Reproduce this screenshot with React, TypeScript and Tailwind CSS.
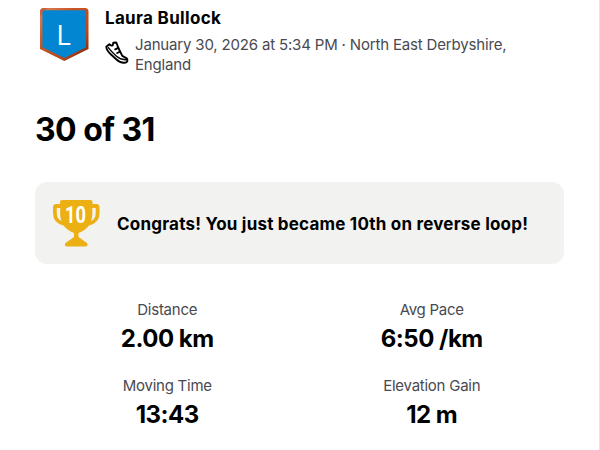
const STATS = [
  { label: 'Distance', value: '2.00 km' },
  { label: 'Avg Pace', value: '6:50 /km' },
  { label: 'Moving Time', value: '13:43' },
  { label: 'Elevation Gain', value: '12 m' },
]

function Avatar() {
  return (
    <svg width="50" height="54" viewBox="0 0 50 54" className="ml-[5px] mt-2 shrink-0">
      <defs>
        <linearGradient id="bronze" x1="0" y1="0" x2="1" y2="1">
          <stop offset="0" stopColor="#b5491f" />
          <stop offset="0.1" stopColor="#d8784c" />
          <stop offset="0.35" stopColor="#cb5424" />
          <stop offset="0.7" stopColor="#b8481b" />
          <stop offset="1" stopColor="#6f260c" />
        </linearGradient>
      </defs>
      <path d="M3.500 0H45Q48.500 0 48.500 3.500V41L24.300 53L0 41V3.500Q0 0 3.500 0Z" fill="url(#bronze)" />
      <path d="M4.700 2.200H43.800Q46 2.200 46 4.500V39.300L24.300 50L2.400 39.300V4.500Q2.400 2.200 4.700 2.200Z" fill="#0286d2" />
      <text x="23.600" y="37.300" textAnchor="middle" fill="#fff" fontSize="28" fontFamily="Open Sans, sans-serif">L</text>
    </svg>
  )
}

function ShoeIcon() {
  return (
    <svg
      width="24"
      height="24"
      viewBox="0 0 24 24"
      fill="none"
      stroke="#000"
      strokeWidth="1.900"
      strokeLinejoin="round"
      strokeLinecap="round"
      className="shrink-0"
    >
      <path d="M1.300 5.800 4.300 3.200Q6.500 5.300 7.700 4.200L8.300 1.700 11.300 1.500 13.400 7 17.300 14.800 21.700 17.300Q23.600 20.500 20.700 21.500 15.500 22.500 11.500 18.500L6 13.500Q1.500 9.500 1.300 5.800Z" />
      <path d="M3.300 6.600Q6.500 10.800 11.500 15.300 16 19.300 22 18.600" strokeWidth="1.400" />
      <path d="M13.200 6.800 10.200 8.300M15 10.700 12.200 12" />
    </svg>
  )
}

function Trophy() {
  return (
    <svg width="48" height="48" viewBox="0 0 48 48" className="mt-px shrink-0">
      <path
        d="M9 0H37.500Q39.500 0 39.500 2V4H43.500Q46.500 4 46.500 7.500V13Q46.500 23 36 25.500 31.500 31 25.500 33V37L34 43Q35.500 46 33 46.500H13.500Q11 46 12.500 43L21 37V33Q15 31 10.500 25.500 0 23 0 13V7.500Q0 4 3 4H7V2Q7 0 9 0Z"
        fill="#edb014"
      />
      <path
        d="M3.800 8H7.200V15Q7.300 18 8.500 21 3.800 19 3.800 13ZM42.700 8H39.300V15Q39.200 18 38 21 42.700 19 42.700 13Z"
        fill="#f2f2f0"
      />
      <text
        x="22.500"
        y="23"
        textAnchor="middle"
        fill="#fff"
        fontSize="23"
        fontWeight="700"
        fontFamily="Roboto, sans-serif"
        textLength="21"
        lengthAdjust="spacingAndGlyphs"
      >
        10
      </text>
    </svg>
  )
}

export default function App() {
  return (
    <div className="h-[450px] w-[600px] overflow-hidden border-r border-[#e6e6ea] bg-white px-[35px] font-['Inter',sans-serif] text-black">
      <header className="flex h-[75px]">
        <Avatar />
        <div className="ml-[15px] pt-2">
          <h1 className="text-[17px] leading-5 font-bold tracking-[0.32px]">Laura Bullock</h1>
          <div className="mt-[7px] flex items-start gap-[6px]">
            <div className="mt-[6px]">
              <ShoeIcon />
            </div>
            <p className="text-[15px] leading-5 tracking-[-0.17px] whitespace-nowrap text-[#494950]">
              January 30, 2026 at 5:34 PM · North East Derbyshire,
              <br />
              England
            </p>
          </div>
        </div>
      </header>

      <h2 className="mt-[35px] text-[32px] leading-10 font-bold tracking-[-0.55px]">30 of 31</h2>

      <div className="mt-8 flex h-[82px] items-center rounded-xl bg-[#f2f2f0] pl-[18px]">
        <Trophy />
        <p className="mt-0.5 ml-4 text-[17px] leading-6 font-bold tracking-[0.21px] whitespace-nowrap">
          Congrats! You just became 10th on reverse loop!
        </p>
      </div>

      <dl className="mt-9 grid grid-cols-2 gap-y-3">
        {STATS.map((stat) => (
          <div key={stat.label} className="h-16 text-center">
            <dt className="text-[15px] leading-5 tracking-[-0.25px] text-[#494950]">{stat.label}</dt>
            <dd className="mt-[3px] text-[24px] leading-8 font-bold tracking-[-0.5px]">{stat.value}</dd>
          </div>
        ))}
      </dl>
    </div>
  )
}
